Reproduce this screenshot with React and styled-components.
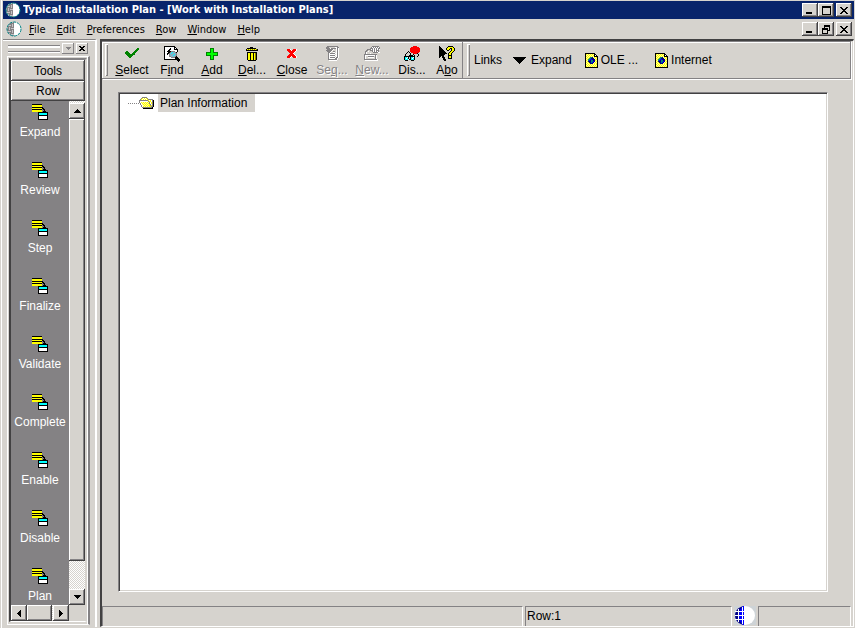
import React from "react";
import styled, { createGlobalStyle, css } from "styled-components";

const FACE = "#d6d3ce";
const SHADOW = "#848284";
const DARK = "#424142";

const GlobalStyle = createGlobalStyle`
  * {
    box-sizing: border-box;
  }
  body {
    margin: 0;
    background: ${FACE};
    font-family: "Liberation Sans", Arial, sans-serif;
    font-size: 12px;
    line-height: 16px;
    color: #000;
  }
  button {
    font: inherit;
    color: inherit;
    padding: 0;
    border: 0;
    background: transparent;
  }
`;

const raised = css`
  background: ${FACE};
  box-shadow: inset -1px -1px ${DARK}, inset 1px 1px #fff,
    inset -2px -2px ${SHADOW};
`;

const checker = css`
  background: repeating-conic-gradient(#fff 0 25%, ${FACE} 0 50%) 0 0 / 2px 2px;
`;

const Window = styled.div`
  display: flex;
  flex-direction: column;
  height: 100vh;
  min-height: 320px;
  padding: 1px 1px 1px 3px;
  box-shadow: inset 1px 0 ${FACE}, inset 2px 0 #fff;
`;

const TitleBar = styled.header`
  display: flex;
  align-items: center;
  height: 18px;
  padding: 0 2px;
  background: #08246b;
  color: #fff;
`;

const Title = styled.h1`
  flex: 1;
  margin: 0 0 0 2px;
  font: bold 11px/18px "DejaVu Sans Condensed", Tahoma, sans-serif;
  white-space: nowrap;
  overflow: hidden;
`;

const MenuBar = styled.nav`
  display: flex;
  align-items: center;
  height: 20px;
  padding: 0 2px 0 3px;
`;

const MenuList = styled.div`
  display: flex;
  flex: 1;
  gap: 11px;
  margin-left: 7px;
`;

const MenuButton = styled.button`
  padding-top: 1px;
  font: 11px/16px "DejaVu Sans Condensed", Tahoma, sans-serif;
`;

const WindowButtons = styled.div`
  display: flex;
`;

const WindowButton = styled.button`
  ${raised}
  display: flex;
  align-items: center;
  justify-content: center;
  width: 16px;
  height: 14px;
  margin-left: ${({ $apart }) => ($apart ? "2px" : 0)};
`;

const Body = styled.div`
  display: flex;
  flex: 1;
  min-height: 0;
`;

const Sidebar = styled.aside`
  display: flex;
  flex-direction: column;
  width: 94px;
  margin-right: 3px;
  padding: 3px 0 2px 4px;
  border-top: 1px solid ${SHADOW};
  border-right: 2px solid #fff;
  box-shadow: inset 0 1px #fff;
`;

const DockHeader = styled.div`
  display: flex;
  align-items: center;
  gap: 2px;
  height: 12px;
  width: 80px;
  margin-left: 1px;
`;

const DockGrip = styled.div`
  flex: 1;
  height: 7px;
  border: solid ${SHADOW};
  border-width: 1px 0;
  box-shadow: inset 0 2px #fff, 0 1px #fff;
  margin-bottom: 2px;
`;

const DockButton = styled.button`
  display: flex;
  align-items: center;
  justify-content: center;
  width: 12px;
  height: 11px;
  background: ${FACE};
  box-shadow: inset -1px -1px ${SHADOW}, inset 1px 1px #fff;
  margin-bottom: 2px;
`;

const DockPanel = styled.div`
  display: flex;
  flex: 1;
  min-height: 0;
  width: 83px;
  margin-top: 1px;
  padding: 1px 1px 2px;
  border: solid;
  border-width: 1px 2px 1px 1px;
  border-color: #fff ${SHADOW} #fff #fff;
  box-shadow: inset -1px 0 #fff;
`;

const Well = styled.div`
  display: flex;
  flex-direction: column;
  flex: 1;
  min-width: 0;
  border: solid;
  border-width: 2px 2px 1px 2px;
  border-color: ${SHADOW} ${FACE} #fff ${DARK};
`;

const TabButton = styled.button`
  ${raised}
  flex: none;
  height: ${({ $tall }) => ($tall ? "21px" : "20px")};
`;

const ScrollGrid = styled.div`
  display: grid;
  grid-template-columns: 1fr 16px;
  grid-template-rows: 1fr 16px;
  flex: 1;
  min-height: 0;
`;

const ShortcutList = styled.div`
  display: flex;
  flex-direction: column;
  gap: 22px;
  padding-top: 3px;
  background: ${SHADOW};
  color: #fff;
  overflow: hidden;
`;

const Shortcut = styled.button`
  display: flex;
  flex: none;
  flex-direction: column;
  align-items: center;
  gap: 4px;
  height: 36px;
`;

const VerticalBar = styled.div`
  display: flex;
  flex-direction: column;
  padding-top: 2px;
  ${checker}
`;

const HorizontalBar = styled.div`
  display: flex;
  ${checker}
`;

const ArrowButton = styled.button`
  ${raised}
  display: flex;
  flex: none;
  align-items: center;
  justify-content: center;
  width: 16px;
  height: 16px;
`;

const VerticalThumb = styled.div`
  ${raised}
  flex: 442;
`;

const VerticalTrack = styled.div`
  flex: 28;
`;

const HorizontalThumb = styled.div`
  ${raised}
  flex: 1;
  margin-right: 1px;
`;

const Main = styled.main`
  display: flex;
  flex-direction: column;
  flex: 1;
  min-width: 0;
  border: solid;
  border-width: 2px 1px 1px 2px;
  border-color: ${DARK} #fff #fff ${DARK};
`;

const Toolbar = styled.div`
  display: flex;
  height: 38px;
  margin-right: 2px;
  border: solid;
  border-width: 1px 1px 1px 0;
  border-color: ${SHADOW};
  box-shadow: inset 1px 1px #fff, 1px 1px #fff;
`;

const ToolGroup = styled.div`
  display: flex;
  align-items: flex-end;
  padding-left: 3px;
  border-right: ${({ $divided }) => ($divided ? `1px solid ${SHADOW}` : 0)};
  margin-right: 1px;
`;

const Grip = styled.div`
  width: 3px;
  height: 32px;
  margin: 0 4px 2px 0;
  background: ${FACE};
  box-shadow: inset 1px 1px #fff, inset -1px -1px ${SHADOW};
`;

const ToolButton = styled.button`
  display: flex;
  flex-direction: column;
  align-items: center;
  width: ${({ $narrow }) => ($narrow ? "30px" : "40px")};
  white-space: nowrap;
  &:disabled {
    color: ${SHADOW};
    text-shadow: 1px 1px #fff;
  }
`;

const LinkBar = styled.div`
  display: flex;
  align-items: center;
  align-self: center;
`;

const LinksLabel = styled.span`
  width: 39px;
`;

const BarLink = styled.a`
  display: flex;
  align-items: center;
  gap: ${({ $wide }) => ($wide ? "5px" : "3px")};
  margin-right: ${({ $after }) => $after}px;
  color: inherit;
  text-decoration: none;
  white-space: nowrap;
`;

const TreePane = styled.div`
  flex: 1;
  margin: 13px 25px 14px 16px;
  border: 1px solid;
  border-color: ${SHADOW} #fff #fff ${SHADOW};
  background: #fff;
  box-shadow: inset 1px 1px ${DARK}, inset -1px -1px ${FACE};
`;

const TreeRow = styled.div`
  display: flex;
  align-items: center;
  height: 18px;
  margin: 1px 0 0 9px;
`;

const TreeLine = styled.span`
  width: 11px;
  border-top: 1px dotted ${SHADOW};
`;

const TreeLabel = styled.button`
  margin-left: 4px;
  padding: 1px 8px 1px 2px;
  background: ${FACE};
`;

const StatusBar = styled.footer`
  display: grid;
  grid-template-columns: 421fr 207fr 22px 93fr;
  column-gap: 2px;
  height: 20px;
  padding-right: 2px;
`;

const StatusCell = styled.div`
  padding: 1px;
  border: solid;
  border-width: 1px 1px 0 1px;
  border-color: ${SHADOW} #fff #fff ${SHADOW};
`;

const PALETTE = {
  k: "#000",
  y: "#ff0",
  w: "#fff",
  c: "#0ff",
  g: "#008200",
  l: "#0f0",
  r: "#f00",
  s: SHADOW,
  b: "#000084",
  u: "#00f",
  t: "#008284",
  o: "#848200",
  v: "#84aec6",
  p: "#ffff9c",
};

// One character per pixel, "." is left empty.
const PixelIcon = ({ rows }) => (
  <svg
    width={rows[0].length}
    height={rows.length}
    shapeRendering="crispEdges"
    aria-hidden="true"
  >
    {rows.map((row, y) =>
      [...row].map((ch, x) =>
        PALETTE[ch] ? (
          <rect
            key={`${x}-${y}`}
            x={x}
            y={y}
            width="1"
            height="1"
            fill={PALETTE[ch]}
          />
        ) : null
      )
    )}
  </svg>
);

const ICONS = {
  form: [
    "kkkkkkkkkk......",
    "yyyyyyyyyy......",
    "yyyyyyyyyy......",
    "kkkkkkkkkkk.....",
    "yyyyyyyyyykk....",
    "kkkkkkkkkk.kk...",
    "yyyyyyyyyy..k...",
    "yyyyyyyyyy.kkk..",
    "......kkkkkkkkkk",
    "......kcccccccck",
    "......kcccccccck",
    "......kkkkkkkkkk",
    "......kwwwwwwwwk",
    "......kwwwwwwwwk",
    "......kwwwwwwwwk",
    "......kkkkkkkkkk",
  ],
  check: [
    "................",
    "................",
    ".............gg.",
    "............ggg.",
    "...........ggg..",
    "..gg......ggg...",
    ".gggg....ggg....",
    ".ggggg..ggg.....",
    "..ggggggggg.....",
    "...gggggg.......",
    "....gggg........",
    ".....gg.........",
    "................",
    "................",
    "................",
    "................",
  ],
  find: [
    "kkkkkkkkkkk.....",
    "kwwwwwwwwwkk....",
    "kwwwwwkwwwkwk...",
    "kwwwwkkwwwkkkk..",
    "kwwwkkwwwwwwwk..",
    "kwwkkkksssswwk..",
    "kwwwkksvcvvsk...",
    "kwwkksvcvvvvs...",
    "kwwkwsvvvvcvs...",
    "kwwwwsvvvcvvs...",
    "kwwwwssvvvvsk...",
    "kwwwwwwsssskkk..",
    "kwwwwwwwwwwkkkk.",
    "kkkkkkkkkkkkkkkk",
    ".............kkk",
    "..............k.",
  ],
  add: [
    "................",
    "................",
    "......gggg......",
    "......gllg......",
    "......gllg......",
    "......gllg......",
    "..gggggllggggg..",
    "..gllllllllllg..",
    "..gllllllllllg..",
    "..gggggllggggg..",
    "......gllg......",
    "......gllg......",
    "......gllg......",
    "......gggg......",
    "................",
    "................",
  ],
  trash: [
    "................",
    "......kkk.......",
    "...kkkkkkkkk....",
    "..kyoyoyoyoyok..",
    "..kkkkkkkkkkkk..",
    "................",
    "...kkkkkkkkkk...",
    "...kyykyykyok...",
    "...kyykyykyok...",
    "...kyykyykyok...",
    "...kyykyykyok...",
    "...kyykyykyok...",
    "...kyykyykyok...",
    "...kyykyykyok...",
    "....kkkkkkkk....",
    "................",
  ],
  close: [
    "................",
    "................",
    "................",
    "...rrrw..rrrw...",
    "...rrrrwrrrrw...",
    "....rrrrrrrw....",
    ".....rrrrrw.....",
    "......rrrw......",
    ".....rrrrrw.....",
    "....rrrrrrrw....",
    "...rrrrwrrrrw...",
    "...rrrw..rrrw...",
    "................",
    "................",
    "................",
    "................",
  ],
  sequence: [
    "...sssssssssss..",
    "..sss......wwss.",
    "..sssswssssswsw.",
    "...ssssssw..wsw.",
    "..ssssssw...wsw.",
    "...ssssw.ss.wsw.",
    "....ssw..ww.wsw.",
    "....swssssswwsw.",
    "....swwwwww.wsw.",
    "....swssssswwsw.",
    "....swwwwww.wsw.",
    "....swssssswssw.",
    "....swwwwwwssw..",
    "....sssssssssw..",
    ".....wwwwwwww...",
    "................",
  ],
  newPlan: [
    "........sssssss.",
    ".......swswswsws",
    "......ssswswswss",
    "...sssswswswswsw",
    "..ss..ssswswsss.",
    ".ss.w...swswsws.",
    ".sw......sssssww",
    ".sw...w.........",
    "sssssssssssss...",
    "swwwwwwwwwwsw...",
    "sw..ssssss.sw...",
    "sw..wwwwww.sw...",
    "sw.........sw...",
    "sssssssssssssw..",
    ".wwwwwwwwwwwww..",
    "................",
  ],
  display: [
    ".........rrrr...",
    ".......rrrrrrrr.",
    "......rrrrrrrrrr",
    "......rrrrrrrrrr",
    "......rrrrrrrrrr",
    "....k.rrrrrrrrrr",
    "...k.k.rrrrrrrr.",
    "..k...k..rrrrk..",
    ".k....k..k....k.",
    ".k...kkkk.k...k.",
    "kkkkkkkkkkk..k..",
    "kccwk.kccwk.....",
    "kcwck.kcwck.....",
    "kcccwkkccck.....",
    ".kkk...kkk......",
    "................",
  ],
  about: [
    "k........kkkkk..",
    "kk......kyyyyyk.",
    "kkk....kyyykkyyk",
    "kkkk...kyyk.kyyk",
    "kkkkk...kk..kyyk",
    "kkkkkk.....kyyk.",
    "kkkkkkk...kyyk..",
    "kkkkkkkk.kyyk...",
    "kkkkkk...kyyk...",
    "kkkkk....kkkk...",
    "kk.kk....kyyk...",
    "k..kkk...kyyk...",
    "....kk...kkkk...",
    "....kkk.........",
    ".....kk.........",
    "................",
  ],
  page: [
    "kkkkkkkkkk...",
    "kypypypypkk..",
    "kpypypypykwk.",
    "kypypypypkkkk",
    "kpypyttbpypyk",
    "kypyttbbbpypk",
    "kpyttuubbbpyk",
    "kyptubttbbypk",
    "kpybbbttubpyk",
    "kypybbtubpypk",
    "kpypybbbpypyk",
    "kypypypypypyk",
    "kpypypypypypk",
    "kypypypypypyk",
    "kkkkkkkkkkkkk",
  ],
  folder: [
    "...sssss.......",
    "..sywywys......",
    ".sywywywysssss.",
    "sssssssssywywsk",
    "swwwwwwwwsyywsk",
    "swypypypypswysk",
    ".swypypypyswysk",
    ".swpypypypyswsk",
    "..swpypypyysysk",
    "..swypypypyyssk",
    "...ssssssssssk.",
    "....kkkkkkkkkk.",
  ],
  minimize: [
    "........",
    "........",
    "........",
    "........",
    "........",
    "........",
    "kkkkkk..",
    "kkkkkk..",
  ],
  maximize: [
    "kkkkkkkkk",
    "kkkkkkkkk",
    "k.......k",
    "k.......k",
    "k.......k",
    "k.......k",
    "k.......k",
    "k.......k",
    "kkkkkkkkk",
  ],
  restore: [
    "..kkkkkk",
    "..kkkkkk",
    "..k....k",
    "kkkkkk.k",
    "kkkkkk.k",
    "k....kkk",
    "k....k..",
    "k....k..",
    "kkkkkk..",
  ],
  cross: [
    "kk....kk",
    ".kk..kk.",
    "..kkkk..",
    "...kk...",
    "..kkkk..",
    ".kk..kk.",
    "kk....kk",
  ],
  smallCross: ["kk..kk", ".kkkk.", "..kk..", ".kkkk.", "kk..kk"],
  smallDown: ["sssss", ".sss.", "..s.."],
  up: ["...k...", "..kkk..", ".kkkkk.", "kkkkkkk"],
  down: ["kkkkkkk", ".kkkkk.", "..kkk..", "...k..."],
  left: ["...k", "..kk", ".kkk", "kkkk", ".kkk", "..kk", "...k"],
  right: ["k...", "kk..", "kkk.", "kkkk", "kkk.", "kk..", "k..."],
  drop: [
    "kkkkkkkkkkkkk",
    ".kkkkkkkkkkk.",
    "..kkkkkkkkk..",
    "...kkkkkkk...",
    "....kkkkk....",
    ".....kkk.....",
    "......k......",
  ],
};

const Globe = () => (
  <svg width="16" height="16" viewBox="0 0 16 16" aria-hidden="true">
    <circle cx="8" cy="8" r="7" fill="#fff" />
    <path d="M8 1a7 7 0 0 0 0 14z" fill={SHADOW} />
    <path
      d="M2 4.5h6M1 7.5h7M2 10.5h6M3 13.5h5M3.5 2v12M6.5 1v14"
      stroke="#c6c3c6"
      strokeDasharray="1 1"
      shapeRendering="crispEdges"
    />
    <circle
      cx="8"
      cy="8"
      r="7"
      fill="none"
      stroke="#008284"
      strokeDasharray="3 1"
    />
  </svg>
);

const StatusGlobe = () => (
  <svg width="22" height="19" viewBox="0 0 22 19" aria-hidden="true">
    <rect width="22" height="19" fill="#ced3d6" />
    <ellipse cx="11" cy="9.5" rx="10" ry="9.5" fill="#fff" />
    <path d="M10 0C4 1 1 5 1 9.5S4 18 10 19z" fill="#000084" />
    <path d="M9 0C6 3 5 6 5 9.5s1 6.500 4 9.500h1V0z" fill="#00f" />
    <path
      d="M1 5.500h10M1 9.500h10M1 13.500h10M4.500 3v13M8.500 1v17"
      stroke="#fff"
      shapeRendering="crispEdges"
    />
  </svg>
);

// "&" goes before the access key letter, as in resource files.
const Mnemonic = ({ text }) => {
  const at = text.indexOf("&");
  if (at < 0) return <span>{text}</span>;
  return (
    <span>
      {text.slice(0, at)}
      <u>{text[at + 1]}</u>
      {text.slice(at + 2)}
    </span>
  );
};

const MENUS = ["&File", "&Edit", "&Preferences", "&Row", "&Window", "&Help"];

const TOOLS = [
  { text: "&Select", icon: "check" },
  { text: "F&ind", icon: "find" },
  { text: "&Add", icon: "add" },
  { text: "&Del...", icon: "trash" },
  { text: "&Close", icon: "close" },
  { text: "Se&q...", icon: "sequence", disabled: true },
  { text: "&New...", icon: "newPlan", disabled: true },
  { text: "Dis...", icon: "display" },
  { text: "A&bo", icon: "about", narrow: true },
];

const SHORTCUTS = [
  "Expand",
  "Review",
  "Step",
  "Finalize",
  "Validate",
  "Complete",
  "Enable",
  "Disable",
  "Plan",
];

const Controls = ({ middle, label }) => (
  <WindowButtons>
    <WindowButton aria-label={`Minimize ${label}`}>
      <PixelIcon rows={ICONS.minimize} />
    </WindowButton>
    <WindowButton aria-label={`${middle} ${label}`}>
      <PixelIcon rows={ICONS[middle]} />
    </WindowButton>
    <WindowButton $apart aria-label={`Close ${label}`}>
      <PixelIcon rows={ICONS.cross} />
    </WindowButton>
  </WindowButtons>
);

const SideBar = () => {
  return (
    <Sidebar>
      <DockHeader>
        <DockGrip />
        <DockButton aria-label="Bar options">
          <PixelIcon rows={ICONS.smallDown} />
        </DockButton>
        <DockButton aria-label="Close bar">
          <PixelIcon rows={ICONS.smallCross} />
        </DockButton>
      </DockHeader>
      <DockPanel>
        <Well>
          <TabButton $tall>Tools</TabButton>
          <TabButton>Row</TabButton>
          <ScrollGrid>
            <ShortcutList>
              {SHORTCUTS.map((name) => (
                <Shortcut key={name}>
                  <PixelIcon rows={ICONS.form} />
                  {name}
                </Shortcut>
              ))}
            </ShortcutList>
            <VerticalBar>
              <ArrowButton aria-label="Scroll up">
                <PixelIcon rows={ICONS.up} />
              </ArrowButton>
              <VerticalThumb />
              <VerticalTrack />
              <ArrowButton aria-label="Scroll down">
                <PixelIcon rows={ICONS.down} />
              </ArrowButton>
            </VerticalBar>
            <HorizontalBar>
              <ArrowButton aria-label="Scroll left">
                <PixelIcon rows={ICONS.left} />
              </ArrowButton>
              <HorizontalThumb />
              <ArrowButton aria-label="Scroll right">
                <PixelIcon rows={ICONS.right} />
              </ArrowButton>
            </HorizontalBar>
          </ScrollGrid>
        </Well>
      </DockPanel>
    </Sidebar>
  );
};

const ToolBar = () => {
  return (
    <Toolbar>
      <ToolGroup $divided>
        <Grip />
        {TOOLS.map(({ text, icon, disabled, narrow }) => (
          <ToolButton key={icon} disabled={disabled} $narrow={narrow}>
            <PixelIcon rows={ICONS[icon]} />
            <Mnemonic text={text} />
          </ToolButton>
        ))}
      </ToolGroup>
      <ToolGroup>
        <Grip />
        <LinkBar>
          <LinksLabel>Links</LinksLabel>
          <BarLink href="#expand" $wide $after={13}>
            <PixelIcon rows={ICONS.drop} />
            Expand
          </BarLink>
          <BarLink href="#ole" $after={17}>
            <PixelIcon rows={ICONS.page} />
            OLE ...
          </BarLink>
          <BarLink href="#internet" $after={0}>
            <PixelIcon rows={ICONS.page} />
            Internet
          </BarLink>
        </LinkBar>
      </ToolGroup>
    </Toolbar>
  );
};

const App = () => {
  return (
    <>
      <GlobalStyle />
      <Window>
        <TitleBar>
          <Globe />
          <Title>Typical Installation Plan - [Work with Installation Plans]</Title>
          <Controls middle="maximize" label="window" />
        </TitleBar>
        <MenuBar>
          <Globe />
          <MenuList>
            {MENUS.map((menu) => (
              <MenuButton key={menu}>
                <Mnemonic text={menu} />
              </MenuButton>
            ))}
          </MenuList>
          <Controls middle="restore" label="plan" />
        </MenuBar>
        <Body>
          <SideBar />
          <Main>
            <ToolBar />
            <TreePane>
              <TreeRow>
                <TreeLine />
                <PixelIcon rows={ICONS.folder} />
                <TreeLabel>Plan Information</TreeLabel>
              </TreeRow>
            </TreePane>
            <StatusBar>
              <StatusCell />
              <StatusCell>Row:1</StatusCell>
              <StatusGlobe />
              <StatusCell />
            </StatusBar>
          </Main>
        </Body>
      </Window>
    </>
  );
};

export default App;
